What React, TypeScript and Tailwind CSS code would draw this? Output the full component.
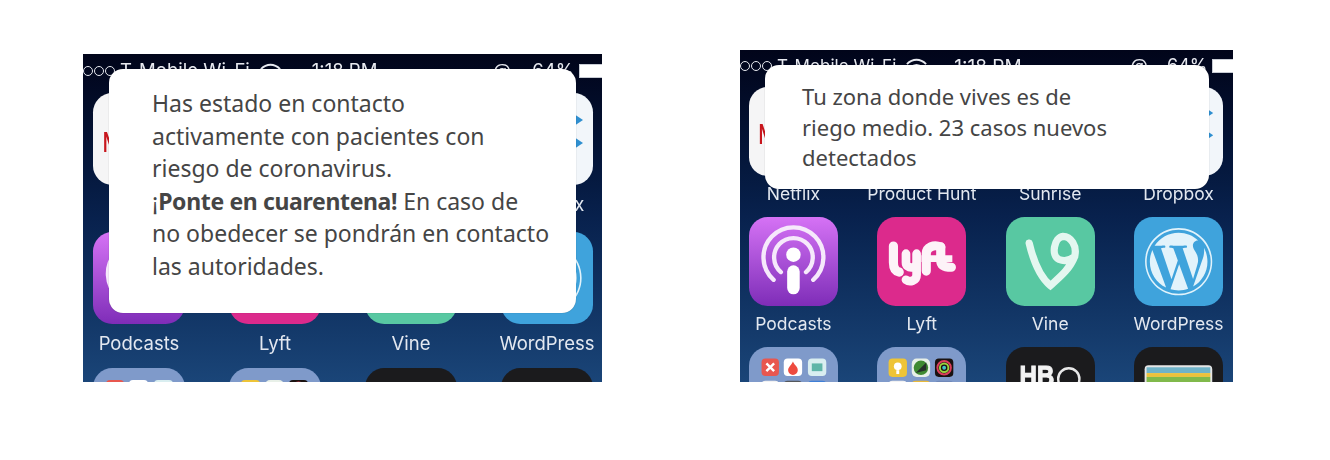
import React from "react"
import { FaWordpress } from "react-icons/fa"
import { Bluetooth } from "lucide-react"

const TileBase = ({ className, children }: { className: string; children?: React.ReactNode }) => (
  <div className={`w-full aspect-square rounded-[21%] overflow-hidden ${className}`}>
    <svg viewBox="0 0 92 92" className="w-full h-full block">
      {children}
    </svg>
  </div>
)

const NetflixIcon = () => (
  <TileBase className="bg-[#f5f5f6]">
    <text x="10" y="59" fontFamily="Liberation Sans" fontWeight="700" fontSize="30" fill="#c8161d" textLength="72" lengthAdjust="spacingAndGlyphs">NETFLIX</text>
  </TileBase>
)

const ProductHuntIcon = () => (
  <TileBase className="bg-[#f5f5f6]">
    <circle cx="46" cy="46" r="32" fill="#da552f" />
  </TileBase>
)

const SunriseIcon = () => (
  <TileBase className="bg-[#f5f5f6]">
    <circle cx="46" cy="50" r="22" fill="#f5a623" />
  </TileBase>
)

const DropboxIcon = () => (
  <TileBase className="bg-[#f2f6fa]">
    <g fill="#2f8fd0">
      <path d="M28 15 46 27 28 39 10 27Z" />
      <path d="M64 15 82 27 64 39 46 27Z" />
      <path d="M28 38 46 50 28 62 10 50Z" />
      <path d="M64 38 82 50 64 62 46 50Z" />
      <path d="M46 56 62 67 46 78 30 67Z" />
    </g>
  </TileBase>
)

const PodcastsIcon = () => (
  <TileBase className="bg-linear-to-b from-[#d672f5] to-[#7f2cb8]">
    <g fill="none" stroke="#f6e9fb" strokeWidth="4.5" strokeLinecap="round">
      <path d="M25.5 65A31 31 0 1 1 66.5 65" />
      <path d="M33 57A20 20 0 1 1 59 57" />
    </g>
    <circle cx="46" cy="39" r="7.5" fill="#fff" />
    <rect x="39.5" y="50" width="13" height="30" rx="6.5" fill="#fff" />
  </TileBase>
)

const LyftIcon = () => (
  <TileBase className="bg-[#dc2a8c]">
    <g fill="none" stroke="#fdf3f8" strokeLinejoin="round">
      <path strokeWidth="9.5" strokeLinecap="round" d="M17 30V47C17 53 19 56 23 57" />
      <path strokeWidth="9" strokeLinecap="round" d="M30 38V47C30 54 41 54 41 47V38M41 47V60C41 66 34 68 30 65" />
      <path strokeWidth="9.5" strokeLinecap="round" d="M51 56V38C51 31 59 28 66 31" />
      <path strokeWidth="9.5" strokeLinecap="round" d="M66 31V45C66 50 70 52 77 52" />
      <path strokeWidth="7" d="M46 43H78" />
    </g>
  </TileBase>
)

const VineIcon = () => (
  <TileBase className="bg-[#58c8a2]">
    <path
      d="M24 27C28 44 35 62 46 71C56 62 66 54 71 41C74 30 67 20 59 20C50 21 46 40 55 44C60 46 66 45 71 41"
      fill="none"
      stroke="#e4f7f0"
      strokeWidth="7.5"
      strokeLinecap="round"
    />
  </TileBase>
)

const WordPressIcon = () => (
  <div className="w-full aspect-square rounded-[21%] bg-[#3fa3dc] flex items-center justify-center">
    <FaWordpress className="w-[78%] h-[78%] text-[#e2f3fb]" />
  </div>
)

const FolderOne = () => (
  <TileBase className="bg-[#7f9aca]">
    <rect x="13" y="12" width="18" height="18" rx="4" fill="#e8574f" />
    <path d="M18 17 26 25M26 17 18 25" stroke="#fff" strokeWidth="2.5" />
    <rect x="36" y="12" width="19" height="18" rx="4" fill="#fff" />
    <path d="M45.5 15C47 19 50.5 20 50.5 24A5 5 0 0 1 40.5 24C40.5 21 43 20 45.5 15Z" fill="#ee4b3f" />
    <rect x="61" y="12" width="19" height="18" rx="4" fill="#d9eef0" />
    <rect x="65" y="17" width="11" height="8" fill="#5fb5a8" />
    <rect x="13" y="35" width="18" height="18" rx="4" fill="#f2f2f2" />
    <rect x="36" y="35" width="19" height="18" rx="4" fill="#55585c" />
    <rect x="61" y="35" width="19" height="18" rx="4" fill="#3f7fd6" />
  </TileBase>
)

const FolderTwo = () => (
  <TileBase className="bg-[#7f9aca]">
    <rect x="12" y="12" width="19" height="19" rx="4" fill="#eec437" />
    <circle cx="21.5" cy="20" r="4" fill="#fff" />
    <rect x="20" y="24" width="3" height="4" fill="#fff" />
    <rect x="36" y="12" width="19" height="19" rx="5" fill="#e8f0e8" />
    <circle cx="45.5" cy="21.5" r="7.5" fill="#3f8a32" />
    <path d="M40 27 51 16 51 24Z" fill="#26302a" />
    <rect x="60" y="12" width="19" height="19" rx="4" fill="#1a1210" />
    <circle cx="69.5" cy="21.5" r="7" fill="none" stroke="#dd3f5d" strokeWidth="2" />
    <circle cx="69.5" cy="21.5" r="4.4" fill="none" stroke="#9bd23c" strokeWidth="2" />
    <circle cx="69.5" cy="21.5" r="2" fill="#3fc7c4" />
    <rect x="12" y="35" width="19" height="18" rx="4" fill="#f2f2f2" />
    <rect x="36" y="35" width="19" height="18" rx="4" fill="#e8b93b" />
    <rect x="60" y="35" width="19" height="18" rx="4" fill="#6f88b8" />
  </TileBase>
)

const HboIcon = () => (
  <TileBase className="bg-[#1b1b1d]">
    <text x="14" y="40" fontFamily="Liberation Sans" fontWeight="700" fontSize="31" fill="#f2f2f2" stroke="#f2f2f2" strokeWidth="1.2" textLength="36" lengthAdjust="spacingAndGlyphs">HB</text>
    <circle cx="65" cy="33" r="11" fill="none" stroke="#e8e8e8" strokeWidth="2.5" />
  </TileBase>
)

const WalletIcon = () => (
  <TileBase className="bg-[#1b1b1d]">
    <rect x="11" y="19" width="70" height="60" rx="4" fill="#e6e6e6" />
    <rect x="13" y="21" width="66" height="6" fill="#6fb3c9" />
    <rect x="13" y="27" width="66" height="4" fill="#ecc23c" />
    <rect x="13" y="31" width="66" height="8" fill="#80b94b" />
    <rect x="13" y="39" width="66" height="8" fill="#e8853a" />
  </TileBase>
)

const apps = [
  { name: "Netflix", icon: <NetflixIcon /> },
  { name: "Product Hunt", icon: <ProductHuntIcon /> },
  { name: "Sunrise", icon: <SunriseIcon /> },
  { name: "Dropbox", icon: <DropboxIcon /> },
  { name: "Podcasts", icon: <PodcastsIcon /> },
  { name: "Lyft", icon: <LyftIcon /> },
  { name: "Vine", icon: <VineIcon /> },
  { name: "WordPress", icon: <WordPressIcon /> },
  { name: "", icon: <FolderOne /> },
  { name: "", icon: <FolderTwo /> },
  { name: "", icon: <HboIcon /> },
  { name: "", icon: <WalletIcon /> },
]

const WifiGlyph = () => (
  <svg viewBox="0 0 24 16" className="w-[23px] h-[16px]" fill="none" stroke="currentColor" strokeWidth="2">
    <path d="M2 6C8 0 16 0 22 6M6 10C10 6 14 6 18 10" />
    <path d="M12 15 9 12C11 11 13 11 15 12Z" fill="currentColor" stroke="none" />
  </svg>
)

type PhoneProps = {
  phone: string
  status: string
  carrier: string
  clock: string
  right: string
  percent: string
  grid: string
  label: string
  modal: string
  children: React.ReactNode
}

const Phone = ({ phone, status, carrier, clock, right, percent, grid, label, modal, children }: PhoneProps) => (
  <div className={`relative overflow-hidden shrink-0 bg-linear-to-b from-[#01051a] via-[#08214d] to-[#1a4578] ${phone}`}>
    <div className="blur-[0.5px]">
      <div className={`flex items-center text-[#e8eaf0] whitespace-nowrap ${status}`}>
        <div className="flex gap-[1px] shrink-0">
          <span className="w-[10px] h-[10px] rounded-full border border-[#e8eaf0]" />
          <span className="w-[10px] h-[10px] rounded-full border border-[#e8eaf0]" />
          <span className="w-[10px] h-[10px] rounded-full border border-[#e8eaf0]" />
        </div>
        <span className={carrier}>T-Mobile Wi-Fi</span>
        <span className="ml-[9px]">
          <WifiGlyph />
        </span>
        <span className={clock}>1:18 PM</span>
        <span className={right}>@</span>
        <Bluetooth className="ml-[9px] w-[17px] h-[17px] text-[#c4cad6]" />
        <span className={percent}>64%</span>
        <span className="ml-[5px] w-[24px] h-[14px] bg-white border border-[#c8ccd4] shrink-0" />
      </div>
      <div className={`grid grid-cols-4 ${grid}`}>
        {apps.map((app, i) => (
          <div key={i} className="min-w-0">
            {app.icon}
            {app.name && (
              <div className={`flex justify-center whitespace-nowrap text-[#e3e8f0] ${label}`}>{app.name}</div>
            )}
          </div>
        ))}
      </div>
    </div>
    <div className={`absolute bg-white text-[#454545] shadow-[0_0_1px_rgba(0,0,0,0.4)] font-['Noto_Sans',sans-serif] ${modal}`}>
      {children}
    </div>
  </div>
)

export default function App() {
  return (
    <div className="w-[1330px] h-[460px] bg-white flex items-end pl-[83px] pb-[78px] gap-[138px] font-['Inter',sans-serif] overflow-hidden">
      <Phone
        phone="w-[519px] h-[328px]"
        status="h-[32px] pt-[1px] text-[18.5px] leading-none"
        carrier="ml-[5px]"
        clock="ml-[30px]"
        right="ml-[116px]"
        percent="ml-[12px]"
        grid="grid-rows-[139px_136px_auto] gap-x-[44px] pl-[10px] pr-[9px] mt-[7px]"
        label="mt-[8px] text-[18.5px] leading-[22px]"
        modal="left-[26px] top-[15px] w-[467px] h-[244px] rounded-[14px] pl-[43px] pt-[18px] text-[23px] leading-[32.5px]"
      >
        <p>Has estado en contacto</p>
        <p>activamente con pacientes con</p>
        <p>riesgo de coronavirus.</p>
        <p>
          ¡<b className="tracking-[-0.35px]">Ponte en cuarentena!</b> En caso de
        </p>
        <p>no obedecer se pondrán en contacto</p>
        <p>las autoridades.</p>
      </Phone>
      <Phone
        phone="w-[493px] h-[332px]"
        status="h-[32px] text-[18px] leading-none"
        carrier="ml-[5px] text-[17px]"
        clock="ml-[26px] text-[19px]"
        right="ml-[109px]"
        percent="ml-[10px]"
        grid="grid-rows-[130px_130px_auto] gap-x-[39.5px] pl-[9px] pr-[10px] mt-[5px]"
        label="mt-[7px] text-[17.5px] leading-[22px]"
        modal="left-[25px] top-[15px] w-[444px] h-[124px] rounded-[14px] pl-[37px] pt-[16px] text-[22px] leading-[30.7px]"
      >
        <p>Tu zona donde vives es de</p>
        <p>riego medio. 23 casos nuevos</p>
        <p>detectados</p>
      </Phone>
    </div>
  )
}
